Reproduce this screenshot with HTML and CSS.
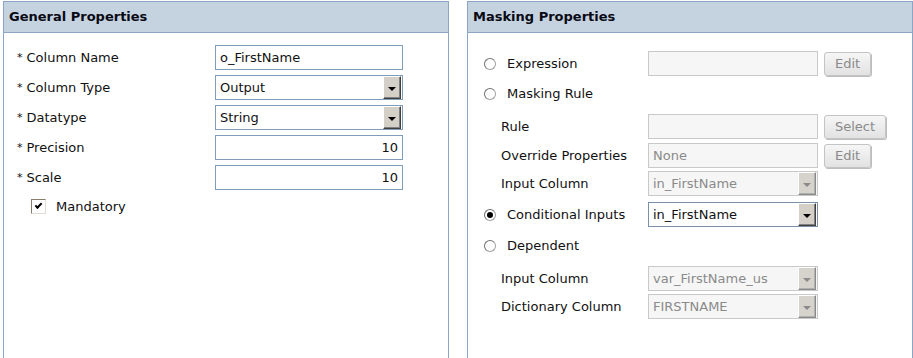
FILE: index.html
```html
<!DOCTYPE html>
<html lang="en">
<head>
    <meta charset="UTF-8">
    <title>Column Properties</title>
    <link rel="stylesheet" href="styles.css">
</head>
<body>
    <div class="panels">
        <!-- General -->
        <div class="panel">
            <div class="panel-header">General Properties</div>
            <div class="panel-body general">
                <div class="row">
                    <label class="req"><span class="star">*</span>Column Name</label>
                    <div class="field">o_FirstName</div>
                </div>
                <div class="row">
                    <label class="req"><span class="star">*</span>Column Type</label>
                    <div class="field combo"><span>Output</span><span class="drop"><i></i></span></div>
                </div>
                <div class="row">
                    <label class="req"><span class="star">*</span>Datatype</label>
                    <div class="field combo"><span>String</span><span class="drop"><i></i></span></div>
                </div>
                <div class="row">
                    <label class="req"><span class="star">*</span>Precision</label>
                    <div class="field num">10</div>
                </div>
                <div class="row">
                    <label class="req"><span class="star">*</span>Scale</label>
                    <div class="field num">10</div>
                </div>
                <div class="check-row">
                    <span class="checkbox checked"></span>
                    <span>Mandatory</span>
                </div>
            </div>
        </div>

        <!-- Masking -->
        <div class="panel">
            <div class="panel-header">Masking Properties</div>
            <div class="panel-body masking">
                <div class="mrow first">
                    <span class="radio"></span>
                    <label class="opt">Expression</label>
                    <div class="field disabled"></div>
                    <span class="btn">Edit</span>
                </div>
                <div class="mrow">
                    <span class="radio"></span>
                    <label class="opt">Masking Rule</label>
                </div>
                <div class="mrow sub gap8">
                    <label>Rule</label>
                    <div class="field disabled"></div>
                    <span class="btn">Select</span>
                </div>
                <div class="mrow sub gap4">
                    <label>Override Properties</label>
                    <div class="field disabled">None</div>
                    <span class="btn">Edit</span>
                </div>
                <div class="mrow sub gap3">
                    <label>Input Column</label>
                    <div class="field disabled combo"><span>in_FirstName</span><span class="drop"><i></i></span></div>
                </div>
                <div class="mrow gap6">
                    <span class="radio checked"></span>
                    <label class="opt">Conditional Inputs</label>
                    <div class="field combo active"><span>in_FirstName</span><span class="drop"><i></i></span></div>
                </div>
                <div class="mrow gap6">
                    <span class="radio"></span>
                    <label class="opt">Dependent</label>
                </div>
                <div class="mrow sub gap8">
                    <label>Input Column</label>
                    <div class="field disabled combo"><span>var_FirstName_us</span><span class="drop"><i></i></span></div>
                </div>
                <div class="mrow sub gap3">
                    <label>Dictionary Column</label>
                    <div class="field disabled combo"><span>FIRSTNAME</span><span class="drop"><i></i></span></div>
                </div>
            </div>
        </div>
    </div>
</body>
</html>
```

FILE: styles.css
```css
body {
    margin: 0;
    font-family: 'DejaVu Sans', Verdana, sans-serif;
    font-size: 13px;
    color: #111;
    background-color: #fff;
    overflow: hidden;
}

.panels {
    display: flex;
    gap: 18px;
    padding: 1px 0 0 3px;
}

.panel {
    width: 444px;
    height: 357px;
    border: 1px solid #8aa6c4;
    border-bottom: none;
}

.panel-header {
    height: 30px;
    line-height: 30px;
    background-color: #c5d3e1;
    border-bottom: 1px solid #8aa6c4;
    padding-left: 5px;
    font-weight: bold;
    font-size: 13px;
    color: #0a0a14;
}

/* General properties */
.general {
    padding: 12px 0 0 13px;
}

.row {
    display: flex;
    align-items: center;
    height: 25px;
    margin-bottom: 5px;
}

.row label {
    width: 198px;
}

.star {
    font-size: 11px;
    margin-right: 4px;
    vertical-align: 1px;
}

.field {
    box-sizing: border-box;
    width: 188px;
    height: 25px;
    border: 1px solid #7f9db9;
    background-color: #fff;
    padding: 0 4px;
    line-height: 23px;
    display: flex;
    align-items: center;
}

.field.num {
    justify-content: flex-end;
    padding-right: 4px;
}

.combo {
    justify-content: space-between;
    padding-right: 1px;
}

.drop {
    box-sizing: border-box;
    width: 18px;
    height: 23px;
    background-color: #d4d0c8;
    border-top: 1px solid #fff;
    border-left: 1px solid #fff;
    border-right: 1px solid #404040;
    border-bottom: 1px solid #404040;
    box-shadow: inset -1px -1px 0 #808080;
    display: flex;
    align-items: center;
    justify-content: center;
}

.drop i {
    width: 0;
    height: 0;
    border-left: 4px solid transparent;
    border-right: 4px solid transparent;
    border-top: 4px solid #000;
    margin-top: 2px;
}

.check-row {
    display: flex;
    align-items: center;
    gap: 10px;
    padding-left: 14px;
    margin-top: 9px;
}

.checkbox {
    box-sizing: border-box;
    width: 15px;
    height: 15px;
    border: 1px solid #8b7d6b;
    border-right-color: #e0dcd4;
    border-bottom-color: #e0dcd4;
    background-color: #fff;
    position: relative;
}

.checkbox.checked::after {
    content: "";
    position: absolute;
    left: 3px;
    top: 3px;
    width: 5px;
    height: 2px;
    border-left: 2px solid #000;
    border-bottom: 2px solid #000;
    transform: rotate(-45deg);
}

/* Masking properties */
.masking {
    padding: 18px 0 0 16px;
}

.mrow {
    display: flex;
    align-items: center;
    height: 25px;
    margin-top: 5px;
}

.mrow.first { margin-top: 0; }
.mrow.gap8 { margin-top: 8px; }
.mrow.gap6 { margin-top: 6px; }
.mrow.gap4 { margin-top: 4px; }
.mrow.gap3 { margin-top: 3px; }

.mrow label {
    width: 147px;
}

.mrow label.opt {
    width: 141px;
    margin-left: 11px;
}

.mrow.sub {
    padding-left: 17px;
}

.radio {
    box-sizing: border-box;
    width: 12px;
    height: 12px;
    border-radius: 50%;
    border: 1px solid #a0a0a0;
    border-top-color: #6e6e6e;
    border-left-color: #6e6e6e;
    background-color: #fff;
    position: relative;
}

.radio.checked::after {
    content: "";
    position: absolute;
    left: 2px;
    top: 2px;
    width: 6px;
    height: 6px;
    border-radius: 50%;
    background-color: #000;
}

.field.disabled {
    width: 170px;
    background-color: #f6f6f6;
    border-color: #c9c9c9;
    color: #8a8a8a;
}

.field.active {
    width: 170px;
    border-color: #7a8fa8;
}

.field.disabled .drop {
    background-color: #d6d3cd;
    border-right-color: #8a8a8a;
    border-bottom-color: #8a8a8a;
    box-shadow: inset -1px -1px 0 #b0b0b0;
}

.field.disabled .drop i {
    border-top-color: #8a8a8a;
}

.btn {
    box-sizing: border-box;
    height: 24px;
    line-height: 22px;
    margin-left: 6px;
    padding: 0 10px;
    border: 1px solid #c4c4c4;
    border-radius: 3px;
    background: linear-gradient(#f6f6f6, #e2e2e2);
    box-shadow: 1px 1px 0 #bdbdbd;
    color: #8a8a8a;
}
```
